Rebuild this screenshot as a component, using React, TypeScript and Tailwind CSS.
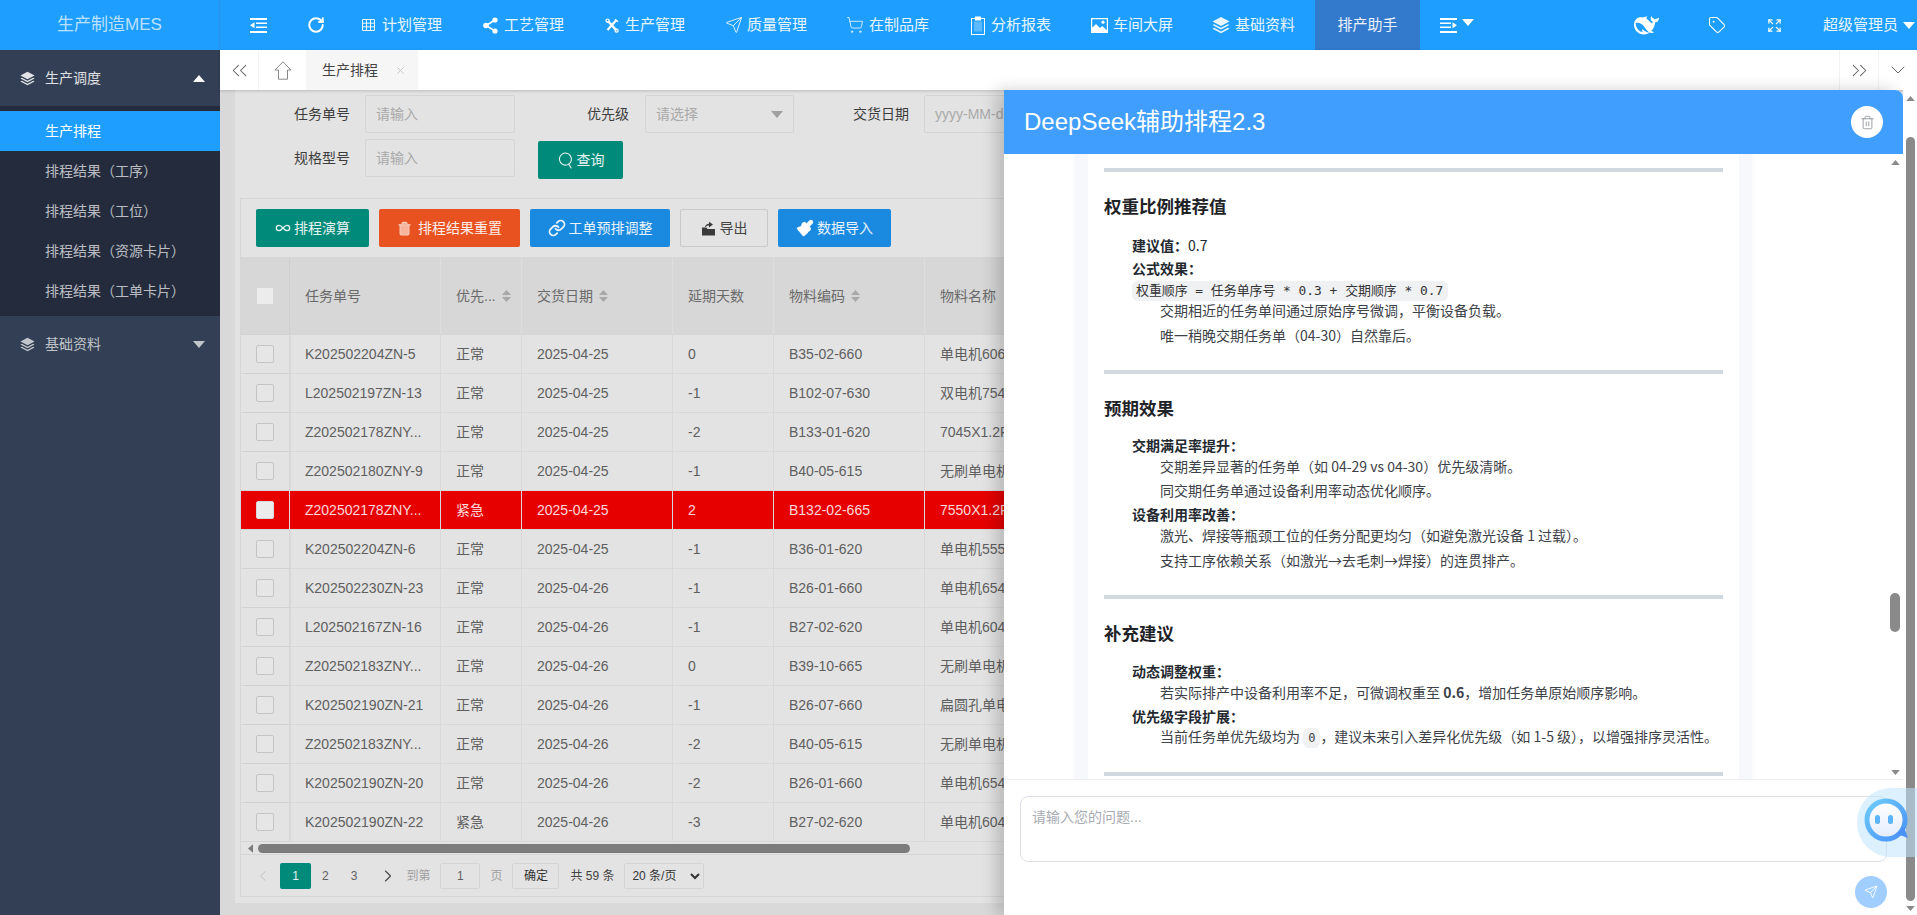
import { useState, type ReactNode } from "react";
import {
  RotateCw, Send, ShoppingCart, Tag, Expand, ChevronsLeft, ChevronsRight, ChevronDown, ChevronLeft,
  ChevronRight, Search, Infinity as InfinityIcon, Trash2, Link, Paintbrush, X,
} from "lucide-react";

function OutdentIcon({ className = "" }: { className?: string }) {
  return (
    <svg width="17" height="15" viewBox="0 0 17 15" fill="currentColor" className={className}>
      <rect width="17" height="2" />
      <rect x="6" y="4.5" width="11" height="1.5" />
      <rect x="6" y="8.5" width="11" height="1.5" />
      <rect y="13" width="17" height="2" />
      <path d="M0 7.2l4.5-3v6z" />
    </svg>
  );
}

function GridIcon() {
  return (
    <svg width="13" height="12" viewBox="0 0 13 12" fill="none" stroke="currentColor" strokeWidth="1">
      <path d="M.5.5h12v11H.5zM.5 4.2h12M.5 7.8h12M4.5.5v11M8.5.5v11" />
    </svg>
  );
}

function ShareIcon() {
  return (
    <svg width="15" height="17" viewBox="0 0 15 17" fill="white" stroke="white">
      <circle cx="12" cy="3" r="2.6" stroke="none" />
      <circle cx="3" cy="8.5" r="2.8" stroke="none" />
      <circle cx="12" cy="14" r="2.6" stroke="none" />
      <path d="M12 3L3 8.5l9 5.5" fill="none" strokeWidth="1.6" />
    </svg>
  );
}

function ToolsIcon() {
  return (
    <svg width="14" height="15" viewBox="0 0 14 15" fill="none" stroke="white">
      <path d="M3 3l8.5 9.5" strokeWidth="2.4" />
      <path d="M11 2.5L2.5 12" strokeWidth="2.2" />
      <circle cx="2.6" cy="2.6" r="1.6" strokeWidth="1.2" />
      <circle cx="11.6" cy="12.6" r="1.6" strokeWidth="1.2" />
      <path d="M10 1.2l3 2.6" strokeWidth="1.4" />
    </svg>
  );
}

function ClipIcon() {
  return (
    <svg width="14" height="19" viewBox="0 0 14 19" fill="none" stroke="white">
      <rect x=".5" y="2.5" width="13" height="16" strokeWidth="1" />
      <rect x="4" y=".5" width="6" height="4" fill="white" stroke="none" />
      <rect x="3" y="5.5" width="8" height="10" fill="white" fillOpacity=".28" stroke="none" />
    </svg>
  );
}

function PictureIcon() {
  return (
    <svg width="17" height="15" viewBox="0 0 17 15" fill="white">
      <path d="M0 0h17v15H0zm1.2 1.2v8.6L5 6l4 4 2.2-2 4.6 4.2V1.2z" fillRule="evenodd" />
      <circle cx="12" cy="4.2" r="1.6" />
    </svg>
  );
}

function LayersIcon({ size = 18 }: { size?: number }) {
  return (
    <svg width={size} height={size} viewBox="0 0 18 18" fill="currentColor">
      <path d="M9 1l8.5 4.5L9 10 .5 5.5z" />
      <path d="M2.2 8.2L9 11.8l6.8-3.6 1.7.9L9 13.6.5 9.1z" />
      <path d="M2.2 11.8L9 15.4l6.8-3.6 1.7.9L9 17.2.5 12.7z" />
    </svg>
  );
}

function HomeIcon() {
  return (
    <svg width="18" height="19" viewBox="0 0 18 19" fill="none" stroke="#8a8a8a" strokeWidth="1">
      <path d="M9 .8L1 9h3.5v9.2h9V9H17z" strokeLinejoin="round" />
    </svg>
  );
}

function ExportIcon() {
  return (
    <svg width="15" height="15" viewBox="0 0 15 15" fill="#3a3a3a">
      <path d="M1 6.5h4.5l1 1.5H14v6.5H1z" />
      <path d="M4 6c.3-2 1.8-3.3 4-3.3V.8L12 3.6 8 6.4V4.6C6.4 4.6 5.4 5.1 5 6z" />
    </svg>
  );
}

const navItems = [
  { label: "计划管理", w: "w-[121px]", gap: "gap-[7px]", icon: <GridIcon /> },
  { label: "工艺管理", w: "w-[122px]", gap: "gap-[6px]", icon: <ShareIcon /> },
  { label: "生产管理", w: "w-[120px]", gap: "gap-[6px]", icon: <ToolsIcon /> },
  { label: "质量管理", w: "w-[121px]", gap: "gap-[4px]", icon: <Send size={18} strokeWidth={1.2} /> },
  { label: "在制品库", w: "w-[125px]", gap: "gap-[5px]", icon: <ShoppingCart size={18} strokeWidth={1.1} /> },
  { label: "分析报表", w: "w-[120px]", gap: "gap-[6px]", icon: <ClipIcon /> },
  { label: "车间大屏", w: "w-[121px]", gap: "gap-[5px]", icon: <PictureIcon /> },
  { label: "基础资料", w: "w-[123px]", gap: "gap-[5px]", icon: <LayersIcon /> },
];

const rows = [
  ["K202502204ZN-5", "正常", "2025-04-25", "0", "B35-02-660", "单电机606"],
  ["L202502197ZN-13", "正常", "2025-04-25", "-1", "B102-07-630", "双电机754"],
  ["Z202502178ZNY...", "正常", "2025-04-25", "-2", "B133-01-620", "7045X1.2P"],
  ["Z202502180ZNY-9", "正常", "2025-04-25", "-1", "B40-05-615", "无刷单电机"],
  ["Z202502178ZNY...", "紧急", "2025-04-25", "2", "B132-02-665", "7550X1.2P"],
  ["K202502204ZN-6", "正常", "2025-04-25", "-1", "B36-01-620", "单电机555"],
  ["K202502230ZN-23", "正常", "2025-04-26", "-1", "B26-01-660", "单电机654"],
  ["L202502167ZN-16", "正常", "2025-04-26", "-1", "B27-02-620", "单电机604"],
  ["Z202502183ZNY...", "正常", "2025-04-26", "0", "B39-10-665", "无刷单电机"],
  ["K202502190ZN-21", "正常", "2025-04-26", "-1", "B26-07-660", "扁圆孔单电机"],
  ["Z202502183ZNY...", "正常", "2025-04-26", "-2", "B40-05-615", "无刷单电机"],
  ["K202502190ZN-20", "正常", "2025-04-26", "-2", "B26-01-660", "单电机654"],
  ["K202502190ZN-22", "紧急", "2025-04-26", "-3", "B27-02-620", "单电机604"],
];

const cols = "grid grid-cols-[49px_151px_81px_151px_101px_151px_200px]";

function Caret({ up, className }: { up?: boolean; className: string }) {
  return (
    <svg width="12" height="7" viewBox="0 0 12 7" className={className} fill="currentColor">
      <path d={up ? "M6 0l6 7H0z" : "M0 0h12L6 7z"} />
    </svg>
  );
}

function Sort() {
  return (
    <span className="ml-[6px] inline-flex flex-col gap-[2px] text-[#a8a8a8]">
      <svg width="9" height="5" viewBox="0 0 9 5" fill="currentColor"><path d="M4.5 0L9 5H0z" /></svg>
      <svg width="9" height="5" viewBox="0 0 9 5" fill="currentColor"><path d="M0 0h9L4.5 5z" /></svg>
    </span>
  );
}

function Whale() {
  return (
    <svg width="25" height="25" viewBox="0 0 24 24" fill="white">
      <path
        fillRule="evenodd"
        d="M23.748 4.482c-.254-.124-.364.113-.512.234-.051.039-.094.09-.137.136-.372.397-.806.657-1.373.626-.829-.046-1.537.214-2.163.848-.133-.782-.575-1.248-1.247-1.548-.352-.156-.708-.311-.955-.65-.172-.241-.219-.51-.305-.774-.055-.16-.11-.323-.293-.35-.2-.031-.278.136-.356.276-.313.572-.434 1.202-.422 1.84.027 1.436.633 2.58 1.838 3.393.137.093.172.187.129.323-.082.28-.18.552-.266.833-.055.179-.137.217-.329.14a5.526 5.526 0 01-1.736-1.18c-.857-.828-1.631-1.742-2.597-2.458a11.365 11.365 0 00-.689-.471c-.985-.957.13-1.743.388-1.836.27-.098.093-.432-.779-.428-.872.004-1.67.295-2.687.684a3.055 3.055 0 01-.465.137 9.597 9.597 0 00-2.883-.102c-1.885.21-3.39 1.102-4.497 2.623C.082 8.606-.231 10.684.152 12.85c.403 2.284 1.569 4.175 3.36 5.653 1.858 1.533 3.997 2.284 6.438 2.14 1.482-.085 3.133-.284 4.994-1.86.47.234.962.327 1.78.397.63.059 1.236-.03 1.705-.128.735-.156.684-.837.419-.961-2.155-1.004-1.682-.595-2.113-.926 1.096-1.296 2.746-2.642 3.392-7.003.05-.347.007-.565 0-.845-.004-.17.035-.237.23-.256a4.173 4.173 0 001.545-.475c1.396-.763 1.96-2.015 2.093-3.517.02-.23-.004-.467-.247-.588zM11.581 18c-2.089-1.642-3.102-2.183-3.52-2.16-.392.024-.321.471-.235.763.09.288.207.486.371.739.114.167.192.416-.113.603-.673.416-1.842-.14-1.897-.167-1.361-.802-2.5-1.86-3.301-3.307-.774-1.393-1.224-2.887-1.298-4.482-.02-.386.093-.522.477-.592a4.696 4.696 0 011.529-.039c2.132.312 3.946 1.265 5.468 2.774.868.86 1.525 1.887 2.202 2.891.72 1.066 1.494 2.082 2.48 2.914.348.292.625.514.891.677-.802.09-2.14.11-3.054-.614z"
      />
    </svg>
  );
}

function ScrollArrow({ up }: { up?: boolean }) {
  return <Caret up={up} className="h-[5px] w-[9px] text-[#8a8a8a]" />;
}

function Bold({ children, className = "" }: { children: ReactNode; className?: string }) {
  return <p className={`ml-[28px] h-[24px] font-bold leading-[24px] text-[#24292f] ${className}`}>{children}</p>;
}

function Sub({ children, className = "" }: { children: ReactNode; className?: string }) {
  return <p className={`ml-[56px] h-[24px] whitespace-nowrap leading-[24px] text-[#3d4148] ${className}`}>{children}</p>;
}

function Rule({ className = "" }: { className?: string }) {
  return <div className={`h-[4px] bg-[#d1d9e0] ${className}`} />;
}

function Heading({ children }: { children: ReactNode }) {
  return <h2 className="mt-[21px] h-[26px] text-[17.5px] font-bold leading-[26px] text-[#1f2328]">{children}</h2>;
}

function Checkbox({ light }: { light?: boolean }) {
  return <span className={`block h-[18px] w-[18px] rounded-[2px] border ${light ? "border-[#d8d8d8] bg-[#ececec]" : "border-[#c4c4c4] bg-[#e6e6e6]"}`} />;
}

export default function App() {
  const [question, setQuestion] = useState("");
  const [perPage, setPerPage] = useState("20");

  return (
    <div className="relative flex h-[915px] w-full flex-col overflow-hidden bg-[#d9d9d9] text-[14px] [font-family:'Liberation_Sans','Noto_Sans_CJK_SC',sans-serif]">
      {/* top bar */}
      <header className="flex h-[50px] shrink-0 bg-[#1e9fff] text-white">
        <div className="flex w-[220px] shrink-0 items-center justify-center border-r border-[#2a95e6] text-[17px] text-white/70">生产制造MES</div>
        <div className="flex w-[122px] shrink-0 items-center">
          <OutdentIcon className="ml-[30px]" />
          <RotateCw size={18} strokeWidth={2.6} className="ml-[40px]" />
        </div>
        {navItems.map(item => (
          <div key={item.label} className={`flex items-center px-5 text-[15px] text-white/90 ${item.w} ${item.gap}`}>
            <span className="shrink-0">{item.icon}</span>
            <span className="whitespace-nowrap">{item.label}</span>
          </div>
        ))}
        <div className="flex w-[105px] items-center justify-center bg-[#3379cc] text-[15px] text-white/90">排产助手</div>
        <div className="ml-[20px] flex items-center">
          <OutdentIcon className="-scale-x-100" />
          <Caret className="mb-[5px] ml-[5px] text-white" />
        </div>
        <div className="ml-auto flex items-center pr-[2px]">
          <Whale />
          <Tag size={18} strokeWidth={1.4} className="ml-[49px]" />
          <Expand size={15} className="ml-[41px]" />
          <span className="ml-[41px] text-[15px] text-white/90">超级管理员</span>
          <Caret className="ml-[5px] text-white" />
        </div>
      </header>

      <div className="flex min-h-0 flex-1">
        {/* sidebar */}
        <aside className="w-[220px] shrink-0 bg-[#333f54] text-white/70">
          <div className="flex h-[56px] items-center pl-[20px] pr-[15px] text-white/85">
            <LayersIcon size={15} />
            <span className="ml-[10px]">生产调度</span>
            <Caret up className="ml-auto text-white" />
          </div>
          <div className="bg-[#232b3d] pb-[5px] pt-[5px]">
            <div className="flex h-[40px] items-center bg-[#1e9fff] pl-[45px] text-white">生产排程</div>
            {["排程结果（工序）", "排程结果（工位）", "排程结果（资源卡片）", "排程结果（工单卡片）"].map(label => (
              <div key={label} className="flex h-[40px] items-center pl-[45px]">{label}</div>
            ))}
          </div>
          <div className="flex h-[56px] items-center pl-[20px] pr-[15px]">
            <LayersIcon size={15} />
            <span className="ml-[10px]">基础资料</span>
            <Caret className="ml-auto text-white/70" />
          </div>
        </aside>

        <main className="flex min-w-0 flex-1 flex-col">
          {/* tab strip */}
          <div className="z-10 flex h-[40px] shrink-0 items-stretch bg-white text-[#666] shadow-[0_1px_3px_rgba(0,0,0,.18)]">
            <div className="flex w-[39px] items-center justify-center border-r border-[#f2f2f2]"><ChevronsLeft size={25} strokeWidth={1} /></div>
            <div className="flex w-[47px] items-center justify-center"><HomeIcon /></div>
            <div className="flex w-[112px] items-center bg-[#f6f6f6] pl-[16px] text-[#444]">
              生产排程
              <X size={11} className="ml-[17px] text-[#c2c2c2]" />
            </div>
            <div className="ml-auto flex w-[40px] items-center justify-center border-x border-[#f2f2f2]"><ChevronsRight size={25} strokeWidth={1} /></div>
            <div className="flex w-[38px] items-center justify-center"><ChevronDown size={24} strokeWidth={1} /></div>
          </div>

          <div className="min-h-0 flex-1 pl-[15px]">
            <div className="h-[813px] bg-[#e3e3e3] px-[5px]">
              <div className="h-[108px] text-[#3d3d3d]">
                <div className="flex items-center pt-[5px]">
                  <label className="w-[110px] text-right">任务单号</label>
                  <div className="ml-[15px] flex h-[38px] w-[150px] items-center rounded-[2px] border border-[#d4d4d4] pl-[10px] text-[#a9a9a9]">请输入</div>
                  <label className="w-[114px] text-right">优先级</label>
                  <div className="ml-[16px] flex h-[38px] w-[149px] items-center justify-between rounded-[2px] border border-[#d4d4d4] pl-[10px] pr-[10px] text-[#a9a9a9]">
                    请选择
                    <Caret className="text-[#a0a0a0]" />
                  </div>
                  <label className="w-[115px] text-right">交货日期</label>
                  <div className="ml-[15px] flex h-[38px] w-[150px] items-center rounded-[2px] border border-[#d4d4d4] pl-[10px] text-[#a9a9a9]">yyyy-MM-dd</div>
                </div>
                <div className="mt-[6px] flex items-start">
                  <label className="flex h-[38px] w-[110px] items-center justify-end">规格型号</label>
                  <div className="ml-[15px] flex h-[38px] w-[150px] items-center rounded-[2px] border border-[#d4d4d4] pl-[10px] text-[#a9a9a9]">请输入</div>
                  <button className="ml-[23px] mt-[2px] flex h-[38px] w-[85px] items-center justify-center gap-[2px] rounded-[2px] bg-[#008a7a] text-white/90">
                    <Search size={18} strokeWidth={1.4} className="rotate-12" />查询
                  </button>
                </div>
              </div>

              {/* data table */}
              <div className="h-[699px] overflow-hidden border border-[#d6d6d6] text-[#5f5f5f]">
                <div className="flex h-[58px] items-center gap-[10px] pl-[15px]">
                  <button className="flex h-[38px] w-[113px] items-center justify-center gap-[3px] rounded-[2px] bg-[#008a7a] text-white/90"><InfinityIcon size={16} />排程演算</button>
                  <button className="flex h-[38px] w-[141px] items-center justify-center gap-[6px] rounded-[2px] bg-[#e85220] text-white/90"><Trash2 size={15} fill="#f6b59c" className="text-[#f6c9b6]" />排程结果重置</button>
                  <button className="flex h-[38px] w-[140px] items-center justify-center gap-[3px] rounded-[2px] bg-[#1a8ae0] text-white/90"><Link size={18} strokeWidth={2.4} />工单预排调整</button>
                  <button className="flex h-[38px] w-[88px] items-center justify-center gap-[4px] rounded-[2px] border border-[#c9c9c9] text-[#444]"><ExportIcon />导出</button>
                  <button className="flex h-[38px] w-[113px] items-center justify-center gap-[3px] rounded-[2px] bg-[#1a8ae0] text-white/90"><Paintbrush size={18} fill="white" />数据导入</button>
                </div>

                <div className={`${cols} h-[78px] items-stretch border-y border-[#d6d6d6] bg-[#d7d7d7] text-[#6a6a6a]`}>
                  <div className="flex items-center justify-center border-r border-[#cfcfcf]"><Checkbox light /></div>
                  <div className="flex items-center border-r border-[#dedede] pl-[15px]">任务单号</div>
                  <div className="flex items-center border-r border-[#dedede] pl-[15px]">优先...<Sort /></div>
                  <div className="flex items-center border-r border-[#dedede] pl-[15px]">交货日期<Sort /></div>
                  <div className="flex items-center border-r border-[#dedede] pl-[15px]">延期天数</div>
                  <div className="flex items-center border-r border-[#dedede] pl-[15px]">物料编码<Sort /></div>
                  <div className="flex items-center pl-[15px]">物料名称</div>
                </div>

                {rows.map((row, i) => {
                  const urgent = i === 4;
                  return (
                    <div key={i} className={`${cols} h-[39px] items-stretch border-b ${urgent ? "border-[#d9d9d9] bg-[#e60000] text-[#fbd9d9]" : "border-[#d9d9d9]"}`}>
                      <div className={`flex items-center justify-center border-r ${urgent ? "border-[#d9d9d9]" : "border-[#d6d6d6] shadow-[1px_0_2px_rgba(0,0,0,.05)]"}`}>
                        <Checkbox light={urgent} />
                      </div>
                      {row.map((cell, j) => (
                        <div key={j} className={`flex items-center overflow-hidden whitespace-nowrap pl-[15px] ${j < 5 ? "border-r border-[#d9d9d9]" : ""}`}>{cell}</div>
                      ))}
                    </div>
                  );
                })}

                <div className="flex h-[13px] items-center border-b border-[#d6d6d6] pl-[5px]">
                  <Caret up className="h-[5px] w-[9px] -rotate-90 text-[#7c7c7c]" />
                  <div className="ml-[3px] h-[9px] w-[652px] rounded-full bg-[#7c7c7c]" />
                </div>

                <div className="flex h-[42px] items-center text-[12px]">
                  <ChevronLeft size={18} strokeWidth={1} className="ml-[13px] text-[#b5b5b5]" />
                  <span className="ml-[8px] flex h-[26px] w-[31px] items-center justify-center rounded-[2px] bg-[#008a7a] text-white/90">1</span>
                  <span className="ml-[11px]">2</span>
                  <span className="ml-[22px]">3</span>
                  <ChevronRight size={20} strokeWidth={1.3} className="ml-[21px] text-[#444]" />
                  <span className="ml-[8px] text-[#a0a0a0]">到第</span>
                  <span className="ml-[10px] flex h-[26px] w-[40px] items-center justify-center rounded-[2px] border border-[#d4d4d4]">1</span>
                  <span className="ml-[10px] text-[#a0a0a0]">页</span>
                  <span className="ml-[10px] flex h-[26px] w-[47px] items-center justify-center rounded-[2px] border border-[#d4d4d4] text-[#333]">确定</span>
                  <span className="ml-[11px] text-[#444]">共 59 条</span>
                  <select
                    value={perPage}
                    onChange={e => setPerPage(e.target.value)}
                    className="ml-[10px] h-[26px] w-[80px] rounded-[2px] border border-[#d4d4d4] bg-transparent pl-[3px] text-[12px] text-[#333]"
                  >
                    <option value="20">20 条/页</option>
                    <option value="50">50 条/页</option>
                  </select>
                </div>
              </div>
            </div>
          </div>
        </main>
      </div>

      {/* assistant drawer, over the page */}
      <div className="absolute bottom-0 left-[1004px] right-0 top-[90px] z-20 flex">
        <section className="flex min-w-0 flex-1 flex-col rounded-tr-[8px] bg-white shadow-[-8px_0_16px_rgba(0,0,0,.18)]">
          <div className="flex h-[64px] shrink-0 items-center justify-between rounded-tr-[8px] bg-[#409eff] pl-[20px] pr-[20px]">
            <h1 className="text-[24px] text-white">DeepSeek辅助排程2.3</h1>
            <span className="flex h-[32px] w-[32px] items-center justify-center rounded-full bg-white text-[#909399]"><Trash2 size={15} strokeWidth={1.4} /></span>
          </div>

          <div className="relative min-h-0 flex-1 overflow-hidden text-[14px] [font-family:'Noto_Sans_CJK_SC','Noto_Sans',sans-serif]">
            <div className="ml-[71px] h-[700px] w-[677px] border-x-[13px] border-x-[#f7f8fb] bg-white px-[16px] pt-[14px] shadow-[0_0_6px_rgba(0,0,0,.04)]">
              <Rule />
              <Heading>权重比例推荐值</Heading>
              <Bold className="mt-[14px]">建议值：<span className="font-normal">0.7</span></Bold>
              <Bold className="-mt-[1px]">公式效果：</Bold>
              <code className="ml-[28px] mt-[1px] block h-[20px] w-[316px] whitespace-nowrap rounded-[6px] bg-[#f0f1f3] px-[4px] text-[12.9px] leading-[20px] text-[#333] [font-family:'DejaVu_Sans_Mono','Noto_Sans_CJK_SC',monospace]">权重顺序 = 任务单序号 * 0.3 + 交期顺序 * 0.7</code>
              <Sub className="-mt-[3px]">交期相近的任务单间通过原始序号微调，平衡设备负载。</Sub>
              <Sub className="mt-[1px]">唯一稍晚交期任务单（04-30）自然靠后。</Sub>

              <Rule className="mt-[23px]" />
              <Heading>预期效果</Heading>
              <Bold className="mt-[12px]">交期满足率提升：</Bold>
              <Sub className="-mt-[3px]">交期差异显著的任务单（如 04-29 vs 04-30）优先级清晰。</Sub>
              <Sub>同交期任务单通过设备利用率动态优化顺序。</Sub>
              <Bold>设备利用率改善：</Bold>
              <Sub className="-mt-[3px]">激光、焊接等瓶颈工位的任务分配更均匀（如避免激光设备 1 过载）。</Sub>
              <Sub className="mt-[1px]">支持工序依赖关系（如激光→去毛刺→焊接）的连贯排产。</Sub>

              <Rule className="mt-[23px]" />
              <Heading>补充建议</Heading>
              <Bold className="mt-[13px]">动态调整权重：</Bold>
              <Sub className="-mt-[3px]">若实际排产中设备利用率不足，可微调权重至 <b>0.6</b>，增加任务单原始顺序影响。</Sub>
              <Bold>优先级字段扩展：</Bold>
              <Sub className="-mt-[4px]">
                当前任务单优先级均为 <code className="rounded-[6px] bg-[#f0f1f3] px-[5px] py-[3px] text-[12px] [font-family:'DejaVu_Sans_Mono',monospace]">0</code>，建议未来引入差异化优先级（如 1-5 级），以增强排序灵活性。
              </Sub>
              <Rule className="mt-[24px]" />
            </div>

            {/* inner scrollbar */}
            <div className="absolute bottom-[4px] right-[3px] top-[6px] flex w-[10px] flex-col items-center justify-between">
              <ScrollArrow up />
              <ScrollArrow />
            </div>
            <div className="absolute right-[3px] top-[439px] h-[39px] w-[10px] rounded-full bg-[#8a8a8a]" />
          </div>

          <div className="relative h-[136px] shrink-0 border-t border-[#eceef2] px-[16px] pt-[16px]">
            <textarea
              value={question}
              onChange={e => setQuestion(e.target.value)}
              placeholder="请输入您的问题..."
              className="h-[66px] w-full resize-none rounded-[8px] border border-[#dcdfe6] px-[11px] py-[10px] text-[14px] leading-[20px] outline-none placeholder:text-[#a8abb2]"
            />
            <div className="mt-[8px] flex justify-end">
              <span className="flex h-[32px] w-[32px] items-center justify-center rounded-full bg-[#a0cfff] text-white"><Send size={14} strokeWidth={1.5} /></span>
            </div>
          </div>
        </section>

        {/* page scrollbar */}
        <div className="flex w-[14px] shrink-0 flex-col items-center bg-white pb-[4px] pt-[6px]">
          <ScrollArrow up />
          <div className="mt-[36px] w-[9px] flex-1 rounded-full bg-[#8a8a8a]" />
          <div className="mt-[5px]"><ScrollArrow /></div>
        </div>
      </div>

      {/* floating assistant bubble */}
      <div className="absolute left-[1857px] top-[788px] z-30 flex h-[69px] w-[60px] items-center overflow-hidden rounded-l-[34px] bg-[#bfe3fb]/55 pl-[7px]">
        <svg width="50" height="50" viewBox="0 0 50 50" className="shrink-0">
          <defs>
            <linearGradient id="botRing" x1="0" y1="0" x2="1" y2="1">
              <stop offset="0" stopColor="#6ccdfa" />
              <stop offset="1" stopColor="#4a90f7" />
            </linearGradient>
            <linearGradient id="botFace" x1="0" y1="0" x2="0" y2="1">
              <stop offset="0" stopColor="#ffffff" />
              <stop offset="1" stopColor="#e3ecff" />
            </linearGradient>
          </defs>
          <circle cx="22" cy="22" r="19" fill="url(#botFace)" stroke="url(#botRing)" strokeWidth="5" />
          <path d="M33 36l11 4-4-11z" fill="#4a90f7" />
          <rect x="11" y="17" width="5" height="9" rx="2.5" fill="#5ab4f7" />
          <rect x="24" y="17" width="5" height="9" rx="2.5" fill="#5ab4f7" />
        </svg>
      </div>
    </div>
  );
}
